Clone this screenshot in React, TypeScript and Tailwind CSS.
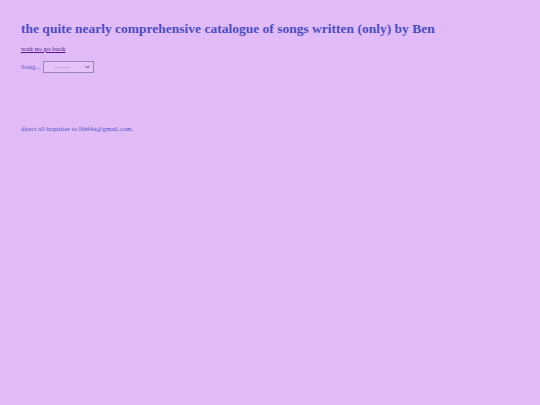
export default function App() {
  return (
    <div
      className="min-h-[405px] w-full bg-[#e0bbf7] px-[21px] pt-[20px] text-[#5656c8]"
      style={{ fontFamily: '"Liberation Serif", serif' }}
    >
      <h1 className="text-[13.5px] font-bold leading-[18px] text-[#4b4cc4]">
        the quite nearly comprehensive catalogue of songs written (only) by Ben
      </h1>
      <a href="#" className="mt-[7px] block text-[7px] leading-[9px] text-[#551a8b] underline decoration-[0.5px]">
        wait no go back
      </a>
      <div className="mt-[7px] flex items-center text-[7px] leading-[9px]">
        <span>Song...</span>
        <div className="relative ml-[2px]">
          <select className="block h-[12px] w-[51px] appearance-none border border-[#9a86b8] bg-[#e4c3f8] pl-[10px] text-[6px] text-[#8a86c8] outline-none">
            <option>--------</option>
          </select>
          <svg
            className="pointer-events-none absolute right-[4px] top-[4px]"
            width="5"
            height="4"
            viewBox="0 0 5 4"
          >
            <path d="M0.5 0.8 L2.5 3 L4.5 0.8" fill="none" stroke="#5a4a8a" strokeWidth="1" />
          </svg>
        </div>
      </div>
      <p className="mt-[51px] text-[6.75px] leading-[9px]">direct all inquiries to lbhf4u@gmail.com.</p>
    </div>
  )
}
